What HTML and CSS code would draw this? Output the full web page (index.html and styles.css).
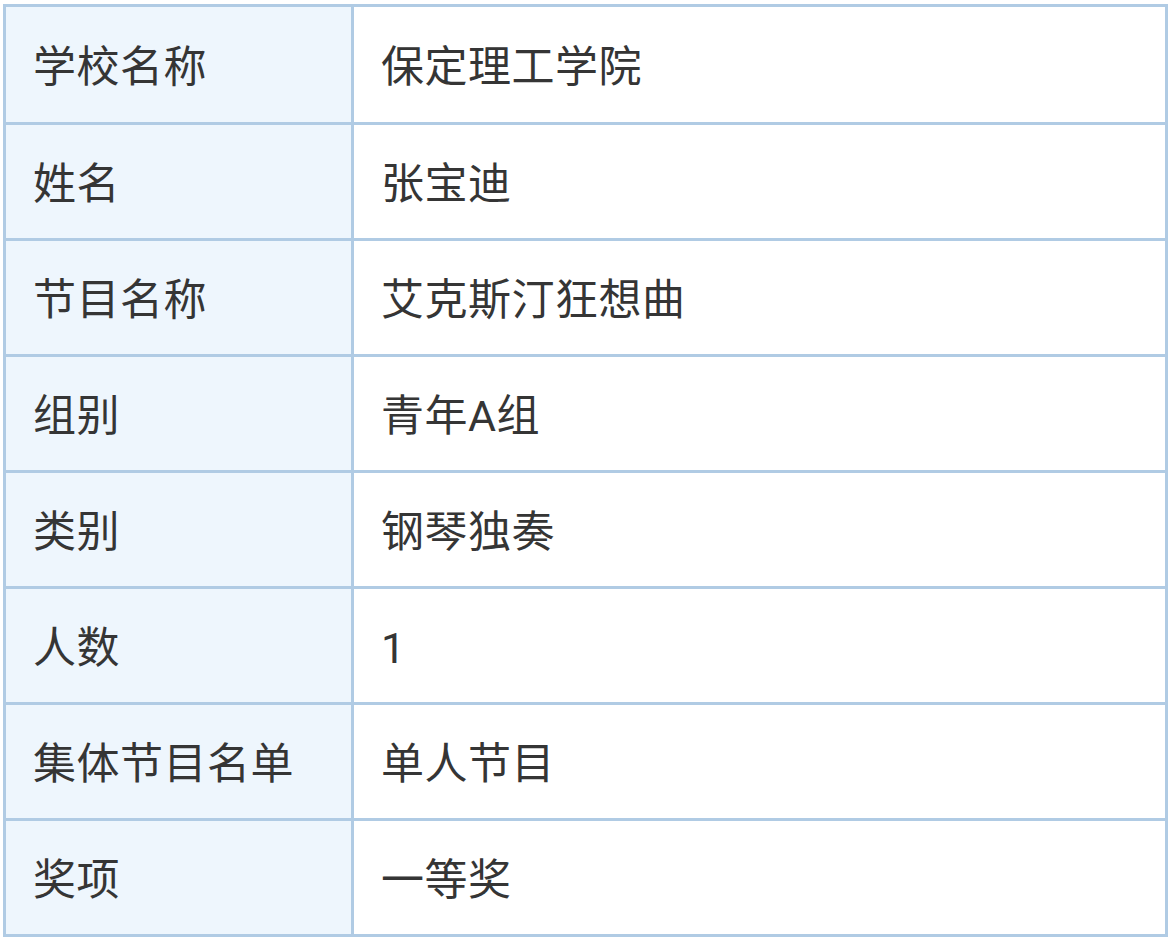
FILE: index.html
```html
<!DOCTYPE html>
<html lang="zh-CN">
<head>
<meta charset="utf-8">
<link rel="stylesheet" href="styles.css">
</head>
<body>
<div class="info">
  <div class="label first">学校名称</div><div class="value first">保定理工学院</div>
  <div class="label">姓名</div><div class="value">张宝迪</div>
  <div class="label">节目名称</div><div class="value">艾克斯汀狂想曲</div>
  <div class="label">组别</div><div class="value">青年A组</div>
  <div class="label">类别</div><div class="value">钢琴独奏</div>
  <div class="label">人数</div><div class="value">1</div>
  <div class="label">集体节目名单</div><div class="value">单人节目</div>
  <div class="label">奖项</div><div class="value">一等奖</div>
</div>
</body>
</html>
```

FILE: styles.css
```css
html, body {
  margin: 0;
  padding: 0;
  background: #ffffff;
}
body {
  padding: 4px 0 0 3px;
}
.info {
  display: grid;
  grid-template-columns: 345px 811px;
  grid-template-rows: 115px repeat(7, 113px);
  gap: 3px;
  padding: 3px;
  width: max-content;
  background: #b0cbe4;
  font-family: Roboto, "Noto Sans CJK SC", "Noto Sans", sans-serif;
  font-size: 43px;
  font-weight: 400;
  letter-spacing: 0.5px;
  color: #353535;
}
.label, .value {
  display: flex;
  align-items: center;
  padding: 6px 0 0 27px;
  line-height: 1;
}
.label {
  background: #eef6fd;
}
.value {
  background: #ffffff;
}
```
